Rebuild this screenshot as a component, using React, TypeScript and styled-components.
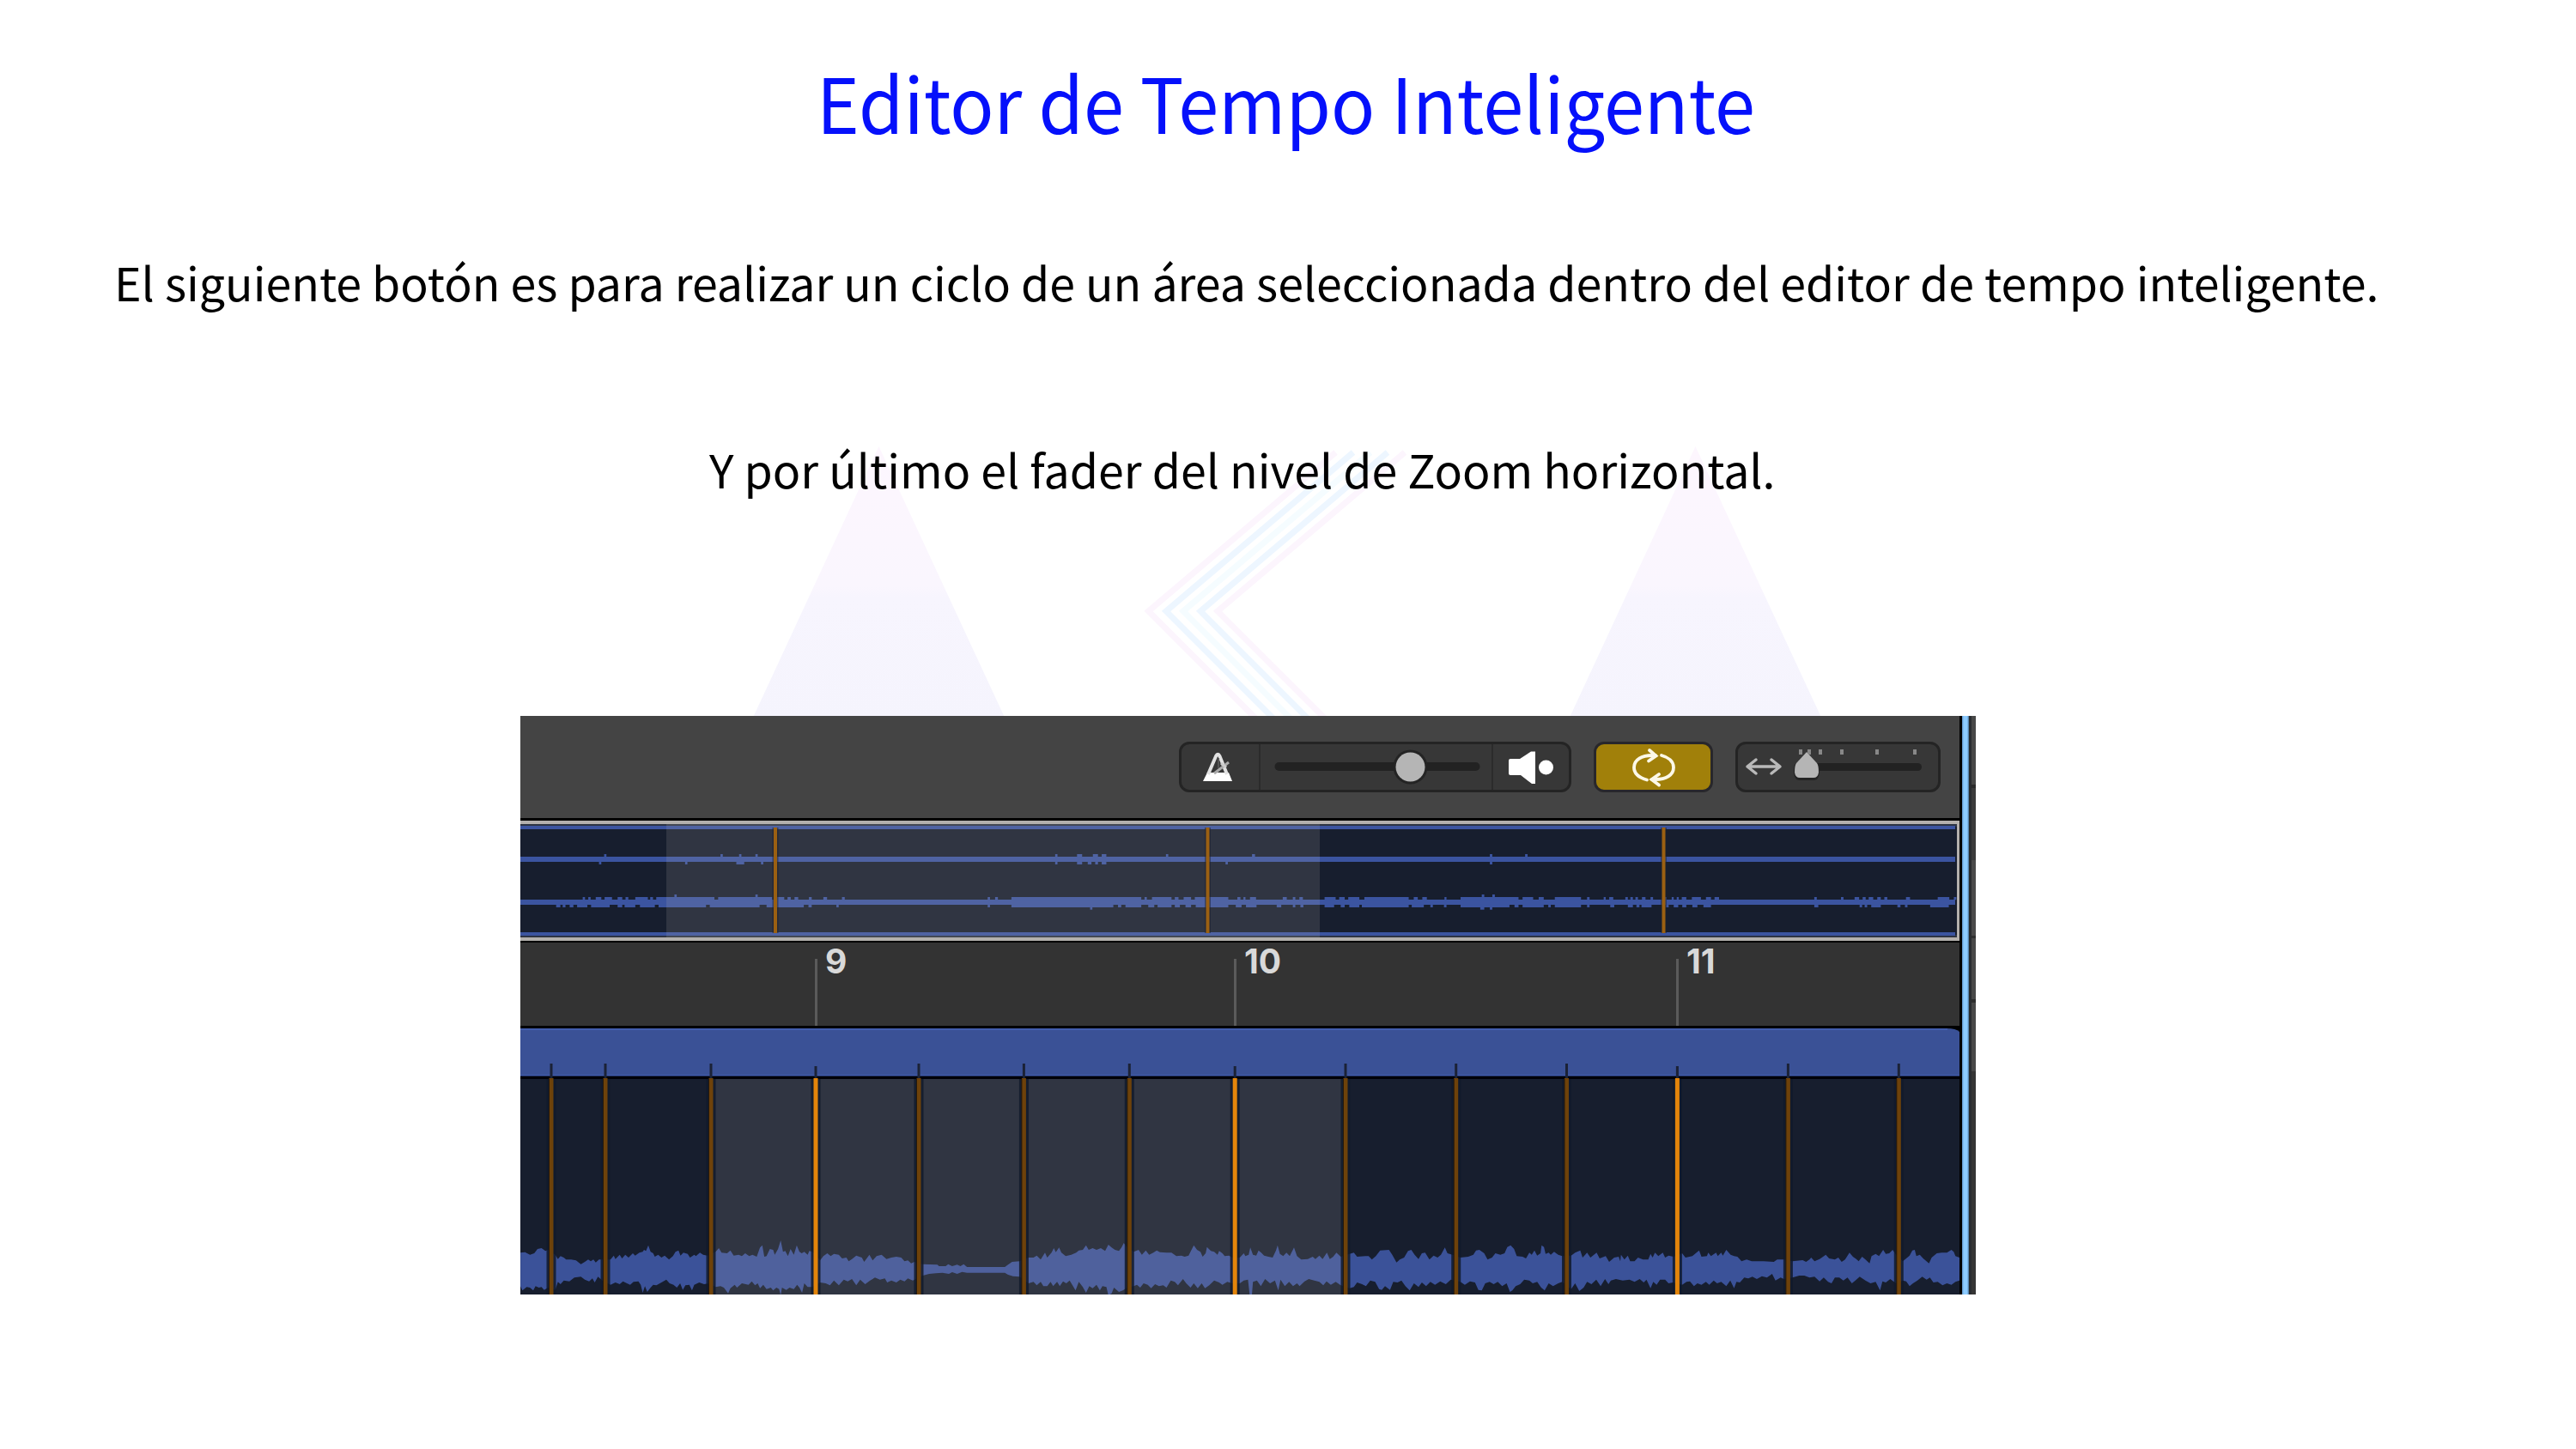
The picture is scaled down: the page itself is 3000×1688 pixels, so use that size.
import React from 'react';
import styled, { createGlobalStyle } from 'styled-components';

const GlobalStyle = createGlobalStyle`
  html, body { margin: 0; padding: 0; background: #fff; }
  * { box-sizing: border-box; }
`;

const Slide = styled.main`
  position: relative;
  display: flex;
  flex-direction: column;
  width: 3000px;
  height: 1688px;
  overflow: hidden;
  background: #fff;
  font-family: 'Noto Sans CJK SC', 'Noto Sans', sans-serif;
`;

const Watermark = styled.svg`
  position: absolute;
  left: 860px;
  top: 510px;
`;

const Title = styled.h1`
  position: relative;
  align-self: flex-start;
  margin: 53px 0 0 951px;
  font-size: 89px;
  line-height: 129px;
  font-weight: 400;
  color: #0510fb;
  white-space: nowrap;
  transform: scaleX(0.951);
  transform-origin: 0 0;
`;

const Line = styled.p<{ $top: number; $left: number }>`
  position: relative;
  margin: ${(p) => p.$top}px 0 0 ${(p) => p.$left}px;
  font-size: 53.7px;
  line-height: 80px;
  color: #000;
  white-space: nowrap;
`;

const Editor = styled.section`
  position: relative;
  display: flex;
  margin: 248px 0 0 606px;
  width: 1695px;
  height: 674px;
  background: #000;
`;

const EditorMain = styled.div`
  display: flex;
  flex-direction: column;
  width: 1676px;
`;

const EditorEdge = styled.div`
  width: 8px;
  margin-left: 3px;
  background: linear-gradient(90deg, #5b8dc0 0, #8ccbff 2px, #8ccbff 6px, #476f96 8px);
`;

const NextPane = styled.div`
  flex: 1;
  background: linear-gradient(#474747 0 80px, #2b2b2b 80px 84px, #3b3b3b 84px 168px, #4a4a4a 168px 256px, #303030 256px 259px, #484848 259px 330px, #2d2d2d 330px 334px, #484848 334px 414px, #353535 414px);
  border-left: 3px solid #292c30;
`;

const Toolbar = styled.div`
  display: flex;
  align-items: flex-start;
  justify-content: flex-end;
  height: 119px;
  padding: 30px 22px 0 0;
  background: #444;
`;

const Control = styled.div<{ $width: number; $gap?: number; $active?: boolean }>`
  display: flex;
  align-items: center;
  justify-content: center;
  width: ${(p) => p.$width}px;
  height: 59px;
  margin-left: ${(p) => p.$gap ?? 0}px;
  border: 3px solid ${(p) => (p.$active ? '#28272b' : '#242424')};
  border-radius: 12px;
  background: ${(p) => (p.$active ? '#a1800a' : '#373737')};
`;

const Cell = styled.div<{ $width: number; $end?: number }>`
  display: flex;
  align-items: center;
  justify-content: center;
  width: ${(p) => p.$width}px;
  height: 53px;
  padding-right: ${(p) => p.$end ?? 0}px;
  & + & { border-left: 2px solid #2b2b2b; }
`;

const Overview = styled.div`
  height: 140px;
  margin-top: 3px;
  border: 4px solid #b3b0ad;
  border-left: 0;
  border-right-width: 3px;
  background: #171e2e;
`;

const Ruler = styled.div`
  display: flex;
  height: 97px;
  margin-top: 2px;
  padding-left: 343px;
  background: #333;
`;

const Bar = styled.div<{ $width: number }>`
  display: flex;
  width: ${(p) => p.$width}px;
  height: 97px;
`;

const BarTick = styled.i`
  width: 3px;
  height: 78px;
  margin-top: 19px;
  background: #5b5b5b;
`;

const BarLabel = styled.span`
  margin: -1px 0 0 9px;
  font: 650 39px/46px Inter, 'Liberation Sans', sans-serif;
  color: #d9d9d9;
`;

const Drawing = styled.svg`
  display: block;
  flex: none;
`;

const Track = styled(Drawing)`
  margin-top: 3px;
`;

type Pt = [number, number];

const parse = (s: string, ox: number, sx: number): Pt[] =>
  s.trim().split(/\s+/).map((p) => {
    const [x, y] = p.split(',').map(Number);
    return [ox + x / sx - 606, y / 3 - 18] as Pt;
  });

const upper: Pt[] = [
  ...parse(`16,838 30,836 45,845 58,840 68,825 80,822 92,832 100,828 122,845 130,860 138,850 148,855 155,862 170,862 185,865 200,878 212,870 222,862 230,868 238,862 245,872 255,862 265,862 290,862 300,848 305,860 318,845 325,858 335,845 345,855 358,840 365,848 378,838 388,835 392,828 398,832 405,812 412,835 420,840 425,852 435,845 445,855 455,848 468,862 480,850 488,835 497,830 503,848 512,838 525,842 532,855 545,845 550,850 562,838 572,845 585,848 610,835 620,822 628,838 645,840 655,830 665,848 680,845 690,850 700,840 712,850 722,845 735,852 745,820 752,812 758,852 765,850 775,825 785,828 790,845 800,825 808,795 815,835 822,832 830,850 838,825 848,845 857,812 865,835 872,840 880,835 890,845 895,832 905,835 928,865 938,850 950,840 960,850 970,842 985,845 995,858 1008,855 1015,868 1025,860 1038,848 1055,855 1062,870 1078,845 1088,865 1100,850 1115,845 1130,860 1145,855 1160,852 1175,855 1185,868 1195,865 1205,875 1215,870 1240,878 1285,880 1290,885 1310,885 1318,878 1330,885 1345,880 1355,885 1365,878 1375,888 1490,888 1500,880 1512,870 1535,868`, 600, 2.6133),
  ...parse(`125,855 140,855 150,848 162,862 175,838 182,855 195,838 202,822 208,836 218,820 225,838 238,850 255,845 270,838 278,830 290,828 300,812 308,828 320,822 332,828 345,822 358,832 368,810 378,820 388,828 400,832 408,820 415,804 422,815 445,835 460,828 470,845 482,830 492,845 505,838 515,830 525,836 545,838 560,838 575,850 590,848 600,852 612,848 620,830 628,812 638,828 648,835 655,852 664,840 668,818 680,832 690,835 700,845 705,832 715,840 722,850 735,848 745,855 768,855 780,840 785,850 795,845 800,820 808,845 818,848 825,830 833,838 842,848 855,852 868,855 878,830 883,812 890,842 900,850 910,838 920,850 933,820 942,850 955,862 975,860 990,852 998,860 1010,848 1020,860 1033,838 1042,860 1052,852 1062,838 1075,852 1102,842 1115,838 1125,852 1150,850 1160,850 1170,862 1182,850 1195,830 1222,828 1232,845 1245,872 1255,862 1268,855 1280,832 1290,828 1300,845 1312,860 1322,840 1332,838 1345,862 1358,848 1370,855 1380,845 1392,820 1400,840 1415,845`, 1150, 2.6133),
  ...parse(`2,855 25,852 40,845 48,830 58,828 72,840 82,862 95,855 105,840 120,845 132,840 140,818 150,812 160,825 168,850 185,852 195,858 205,838 212,845 220,830 228,848 238,840 241,812 248,818 253,842 262,838 268,845 278,835 290,845 302,850 328,848 340,838 355,830 362,855 375,838 385,855 403,838 412,858 430,850 440,870 455,855 468,852 473,868 475,845 485,862 495,848 502,868 515,868 525,855 540,862 555,862 562,842 568,855 575,838 585,850 598,838 605,855 615,848 630,852 655,840 665,855 685,850 695,840 705,830 712,852 728,850 732,838 740,850 755,838 760,850 770,838 775,848 785,828 798,845 808,850 818,852 830,868 845,862 860,868 895,868 925,870 935,862 955,862 980,868 1010,864 1020,870 1030,862 1035,855 1045,868 1060,860 1078,845 1088,858 1105,862 1115,855 1125,870 1135,862 1148,838 1158,852 1168,860 1175,868 1185,852 1195,862 1207,875 1213,850 1225,842 1235,850 1247,828 1255,842 1265,840 1275,828 1285,845 1305,868 1315,858 1325,848 1333,830 1340,828 1345,850 1355,845 1365,858 1382,875 1390,855 1405,840 1420,838 1435,838 1448,828 1455,835 1460,850 1472,855`, 1700, 2.5290),
];

const lower: Pt[] = [
  ...parse(`16,955 22,970 35,958 45,960 55,970 62,955 72,960 80,958 88,968 100,960 122,968 130,940 138,948 148,935 165,938 180,925 200,922 212,932 225,938 235,928 242,942 252,922 265,935 290,950 305,942 318,948 328,938 340,945 350,950 360,940 375,938 382,950 388,978 395,955 402,975 412,960 420,950 430,952 445,942 460,932 470,945 482,950 492,960 502,945 510,968 518,952 530,950 538,970 545,950 560,942 575,948 590,945 610,958 625,955 635,960 648,980 655,962 668,950 675,960 690,945 710,950 720,938 730,952 738,945 745,962 755,950 765,965 778,960 785,970 795,960 803,965 808,987 812,960 825,968 835,960 848,965 858,950 865,960 873,978 880,945 890,958 905,958 928,942 945,945 958,952 970,935 985,952 1000,932 1012,938 1025,930 1038,952 1050,932 1065,948 1080,935 1095,925 1110,932 1125,928 1132,942 1145,935 1160,942 1172,932 1185,938 1195,928 1210,935 1240,918 1260,912 1280,910 1300,908 1320,912 1330,906 1345,912 1360,905 1375,908 1490,908 1500,915 1515,920 1535,922`, 600, 2.6133),
  ...parse(`125,945 140,940 150,952 162,940 170,955 182,955 192,940 200,955 212,940 220,955 230,938 240,945 250,935 258,950 268,970 278,940 290,958 300,978 310,955 320,962 332,950 342,970 350,955 362,958 368,987 378,980 385,960 400,975 412,970 425,960 445,955 455,950 465,960 475,945 488,950 498,962 510,948 522,955 535,952 545,960 558,935 570,940 580,952 595,930 605,945 618,960 628,945 640,962 652,945 662,962 675,952 690,935 705,942 715,950 730,940 745,945 768,945 780,935 793,932 798,987 805,985 808,940 820,935 832,955 845,930 860,945 875,935 885,970 892,932 905,955 918,940 930,955 942,945 950,955 965,938 978,930 995,935 1010,940 1022,952 1032,938 1045,950 1060,940 1075,952 1102,962 1115,958 1125,942 1140,948 1152,955 1165,935 1180,940 1192,965 1200,968 1210,955 1225,968 1235,940 1248,942 1260,935 1272,955 1285,970 1298,945 1312,958 1322,942 1335,955 1348,940 1362,950 1378,938 1395,948 1410,932`, 1150, 2.6133),
  ...parse(`2,940 15,950 30,938 45,942 55,968 65,970 75,945 88,940 100,948 112,940 125,955 138,945 148,975 155,970 165,955 178,948 190,932 205,935 215,945 228,940 240,960 250,970 262,945 275,955 290,945 302,940 328,965 340,945 352,972 365,960 375,940 388,948 402,932 415,955 428,930 438,948 445,935 460,930 480,935 500,932 515,940 530,930 542,942 550,932 562,962 570,940 580,950 590,932 605,932 615,945 628,942 655,950 668,940 678,938 690,955 700,945 712,950 725,940 735,950 748,935 758,945 770,940 785,955 797,935 808,962 815,940 825,942 838,925 850,928 862,922 875,930 890,920 905,925 920,912 930,935 945,925 955,930 980,925 1000,918 1015,918 1030,925 1045,922 1060,938 1072,925 1085,940 1095,945 1105,925 1118,925 1130,935 1142,925 1155,945 1165,935 1178,922 1195,935 1210,945 1225,940 1238,970 1245,938 1255,942 1268,930 1285,945 1305,935 1315,938 1325,955 1335,945 1348,935 1362,922 1375,932 1385,925 1395,942 1408,940 1422,952 1435,945 1448,950 1460,940 1472,935`, 1700, 2.5290),
];

const wavePath = (): string => {
  const order = (pts: Pt[]) => [...pts].sort((a, b) => a[0] - b[0]);
  const fmt = (p: Pt) => `${p[0].toFixed(1)} ${p[1].toFixed(1)}`;
  return `M${order(upper).map(fmt).join('L')}L${order(lower).reverse().map(fmt).join('L')}Z`;
};

const spans = (s: string, ox: number, sx: number): Pt[] =>
  s.trim().split(/\s+/).map((p) => {
    const [a, b] = p.split('-').map(Number);
    return [ox + a / sx - 606, (b - a) / sx] as Pt;
  });

const lowTop = [
  ...spans('145-150 157-162 173-185 192-208 220-230 237-243 258-285 290-296 303-428 436-552 560-578 585-592 600-608 631-637 662-670 702-708 1015-1020 1031-1037 1066-1345 1352-1357 1368-1410 1417-1425 1436-1452 1460-1532 1552-1557', 600, 1.8447),
  ...spans('70-76 82-86 95-107 160-168 180-185 193-200 243-265 272-283 290-312 322-410 420-428 437-446 481-485 513-628 636-657 668-678 700-752 764-769 797-801 808-816 840-845 850-855 860-865 873-880 890-895 918-922 932-936 942-946 952-961 972-990 1000-1010 1017-1026 1215-1220 1268-1273 1295-1304 1311-1317 1323-1332 1340-1347 1354-1360 1397-1405 1460-1483 1492-1497', 1400, 1.7043),
];
const lowBottom = [
  ...spans('88-97 102-108 117-125 133-155 163-203 220-230 235-258 268-300 308-410 418-525 540-620 630-637 690-695 1015-1020 1066-1285 1295-1302 1311-1345 1360-1373 1380-1410 1417-1428 1440-1452 1462-1532 1548-1560', 600, 1.8447),
  ...spans('73-78 87-108 148-157 180-185 195-201 243-262 275-283 292-312 317-410 416-440 453-458 480-485 513-610 620-628 636-678 687-692 700-752 764-769 810-818 845-855 862-868 872-892 920-926 936-945 953-961 973-983 995-1010 1215-1223 1305-1310 1315-1320 1328-1347 1380-1386 1395-1400 1445-1482', 1400, 1.7043),
];
const highTop = [
  ...spans('191-196 441-446 481-486 516-521 1160-1165 1207-1218 1241-1252 1260-1270 1398-1403', 600, 1.8447),
  ...spans('99-105 571-576 641-646', 1400, 1.7043),
];
const highBottom = [
  ...spans('180-185 365-370 475-492 528-533 1160-1165 1207-1218 1230-1238 1246-1252 1260-1270 1526-1531', 600, 1.8447),
  ...spans('571-576', 1400, 1.7043),
];
const peaks = [...spans('342-347 516-521', 600, 1.8447), ...spans('555-560 576-581', 1400, 1.7043)];
const dips = [...spans('1235-1240', 600, 1.8447), ...spans('552-560 571-576', 1400, 1.7043)];

const Spikes = ({ list, y }: { list: Pt[]; y: number }) => (
  <>
    {list.map(([x, w], i) => (
      <rect key={i} x={x} y={y} width={w} height={3.2} />
    ))}
  </>
);

const OverviewWave = () => (
  <Drawing width="1673" height="132" viewBox="0 0 1673 132">
    <rect width="1673" height="3" fill="#2d3443" />
    <rect y="129" width="1673" height="3" fill="#2d3443" />
    <g fill="#3b54a0">
      <rect y="2" width="1671" height="4" />
      <rect y="126" width="1671" height="4" />
      <rect y="38" width="1671" height="6" />
      <rect y="88" width="1671" height="6" />
      <Spikes list={highTop} y={35} />
      <Spikes list={highBottom} y={43.8} />
      <Spikes list={lowTop} y={85} />
      <Spikes list={lowBottom} y={93.8} />
      <Spikes list={peaks} y={82} />
      <Spikes list={dips} y={96.5} />
    </g>
    <rect x="170" width="761" height="132" fill="rgb(195,187,180)" fillOpacity=".15" />
    {[297, 800.5, 1331.5].map((x) => (
      <g key={x}>
        <rect x={x - 3.5} y="4" width="7" height="123" fill="#171e2e" fillOpacity=".5" />
        <rect x={x - 2} y="4" width="4" height="123" fill="#9b6012" />
      </g>
    ))}
  </Drawing>
);

const beats: { x: number; down?: boolean }[] = [
  { x: 642 }, { x: 705 }, { x: 828 }, { x: 950, down: true }, { x: 1070 }, { x: 1192.4 }, { x: 1315.3 },
  { x: 1438.2, down: true }, { x: 1567 }, { x: 1695.7 }, { x: 1824.5 }, { x: 1953.4, down: true },
  { x: 2082.4 }, { x: 2211.3 },
];

const TrackWave = () => (
  <Track width="1676" height="310" viewBox="0 0 1676 310">
    <path d="M0 0H1661Q1672 0 1676 4V56H0Z" fill="#3a5196" />
    <path d="M0 1H1662" stroke="#4460b4" strokeWidth="1.5" />
    <path d="M0 55H1676" stroke="#4460b4" strokeWidth="1.5" />
    <rect y="55.5" width="1676" height="3.5" fill="#000109" />
    <rect y="59" width="1676" height="251" fill="#171e2e" />
    <path d={wavePath()} fill="#3b5299" />
    <rect x="222" y="59" width="739" height="251" fill="rgb(195,187,180)" fillOpacity=".15" />
    {beats.map(({ x, down }) => (
      <g key={x} transform={`translate(${x - 606} 0)`}>
        <rect x="-1.5" y={down ? 44 : 41} width="3" height={down ? 15 : 18} fill="#1b2236" />
        <rect x="-5.5" y="59" width="11" height="251" fill="#101a2b" fillOpacity=".85" />
        <rect x="-2.5" y="58" width="5" height="252" fill={down ? '#e3850b' : '#6e420a'} />
        {!down && <rect x="-3" y="59" width="1" height="251" fill="#26190c" />}
      </g>
    ))}
  </Track>
);

const Metronome = () => (
  <Drawing width="36" height="36" viewBox="0 0 36 36">
    <path d="M1 34L6 24H31L35 34Z" fill="#fff" />
    <path d="M7 26L16 5Q18.3 .5 20.5 5L29 26" fill="none" stroke="#e2e2e2" strokeWidth="4" />
    <path d="M14 25L31 12" stroke="#aaa" strokeWidth="3" />
    <path d="M19 19V7" stroke="#555" strokeWidth="2" />
    <path d="M22 13L28 18" stroke="#ccc" strokeWidth="3" />
  </Drawing>
);

const VolumeSlider = () => (
  <Drawing width="260" height="45" viewBox="0 0 260 45">
    <rect x="11.5" y="17" width="239" height="10" rx="5" fill="#222" />
    <circle cx="169.500" cy="22.5" r="20" fill="#242424" />
    <circle cx="169.500" cy="22.5" r="17" fill="#b5b5b5" />
  </Drawing>
);

const Speaker = () => (
  <Drawing width="54" height="40" viewBox="0 0 54 40">
    <path d="M3 10H14L27 1.5H32V39H28L15 29H3Q1 29 1 27V12Q1 10 3 10Z" fill="#fff" />
    <circle cx="44.5" cy="20" r="8.5" fill="#fff" />
  </Drawing>
);

const Cycle = () => (
  <Drawing width="52" height="46" viewBox="0 0 52 46" fill="none" stroke="#fcf8e8" strokeWidth="3.8" strokeLinecap="round">
    <path d="M18 37.5C9 35 3 30 3 23C3 14 12 9 24 9H28" />
    <path d="M21 3L28.5 9.5L20 15.5" />
    <path d="M35 9C43 11 49 16 49 23C49 32 40 37 28 37H24" />
    <path d="M32 31L23.5 37L32 43.5" />
  </Drawing>
);

const ZoomFader = () => (
  <Drawing width="233" height="53" viewBox="0 0 233 53">
    <path d="M11 26H48M21 18L11 26L21 34M39 18L49 26L39 34" fill="none" stroke="#b9b9b9" strokeWidth="3.5" strokeLinecap="round" strokeLinejoin="round" />
    <g fill="#888">
      {[73, 83, 96, 121, 162, 206].map((x) => (
        <rect key={x} x={x - 2} y="6" width="4" height="6" />
      ))}
    </g>
    <rect x="80" y="22" width="134" height="9" rx="4.5" fill="#222" />
    <path d="M80 9L94 24Q95 26 95 34Q94 41 89 42H71Q66 41 65 34Q65 26 66 24Z" fill="#242424" />
    <path d="M80 9L92 22Q94 24.5 94 33Q93 39 88 39H72Q67 39 66 33Q66 24.5 68 22Z" fill="#b5b5b5" />
  </Drawing>
);

const chevrons = [
  { x: 1337.5, c: '#fcf5fd' }, { x: 1358, c: '#edf6ff' }, { x: 1378, c: '#f5fcff' },
  { x: 1398, c: '#edf6ff' }, { x: 1418, c: '#fcf5fd' },
];

const App = () => (
  <>
    <GlobalStyle />
    <Slide>
      <Watermark width="1300" height="330" viewBox="860 510 1300 330">
        <defs>
          <linearGradient id="peak" x1="0" y1="520" x2="0" y2="840" gradientUnits="userSpaceOnUse">
            <stop offset="0" stopColor="#fdf6fe" />
            <stop offset=".51" stopColor="#faf6fe" />
            <stop offset=".55" stopColor="#f7f5fe" />
            <stop offset="1" stopColor="#f5f4fd" />
          </linearGradient>
        </defs>
        <path d="M1023.5 520L875 840H1172Z M1974.5 520L1826 840H2123Z" fill="url(#peak)" />
        <g fill="none" strokeWidth="7">
          {chevrons.map(({ x, c }) => (
            <path key={x} d={`M${x + 218} 527L${x} 712L${x + 130} 842`} stroke={c} />
          ))}
        </g>
      </Watermark>
      <Title>Editor de Tempo Inteligente</Title>
      <Line $top={106} $left={133}>
        El siguiente botón es para realizar un ciclo de un área seleccionada dentro del editor de tempo inteligente.
      </Line>
      <Line $top={138} $left={826}>Y por último el fader del nivel de Zoom horizontal.</Line>
      <Editor>
        <EditorMain>
          <Toolbar>
            <Control $width={457}>
              <Cell $width={90} $end={6}><Metronome /></Cell>
              <Cell $width={271}><VolumeSlider /></Cell>
              <Cell $width={90}><Speaker /></Cell>
            </Control>
            <Control $width={139} $gap={26} $active><Cycle /></Control>
            <Control $width={239} $gap={26}><ZoomFader /></Control>
          </Toolbar>
          <Overview><OverviewWave /></Overview>
          <Ruler>
            <Bar $width={488}><BarTick /><BarLabel>9</BarLabel></Bar>
            <Bar $width={515}><BarTick /><BarLabel>10</BarLabel></Bar>
            <Bar $width={330}><BarTick /><BarLabel>11</BarLabel></Bar>
          </Ruler>
          <TrackWave />
        </EditorMain>
        <EditorEdge />
        <NextPane />
      </Editor>
    </Slide>
  </>
);

export default App;
